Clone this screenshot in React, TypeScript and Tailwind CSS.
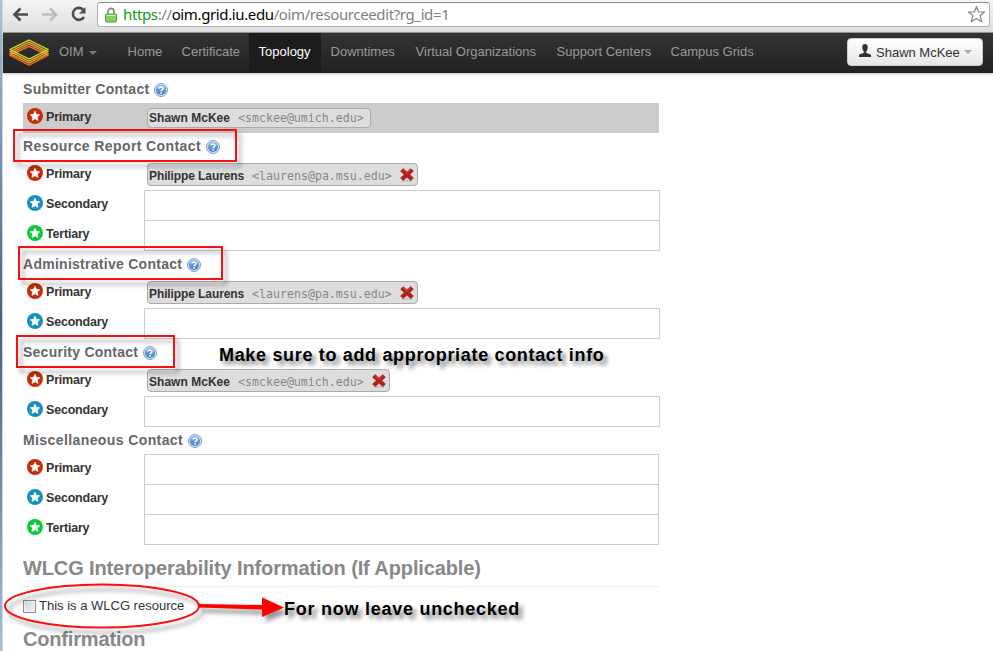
import React from 'react';

type Rank = 'Primary' | 'Secondary' | 'Tertiary';

const rankColor: Record<Rank, string> = {
  Primary: '#c72c08',
  Secondary: '#1790bf',
  Tertiary: '#0bcb3c',
};

function RankIcon({ rank }: { rank: Rank }) {
  return (
    <svg className="size-4 shrink-0" viewBox="0 0 16 16">
      <circle cx="8" cy="8" r="8" fill={rankColor[rank]} />
      <path
        d="M8 3.2 9.4 6.3 12.8 6.7 10.3 9 11 12.4 8 10.7 5 12.4 5.7 9 3.2 6.7 6.6 6.3Z"
        fill="#fff"
        stroke="#fff"
        strokeWidth=".7"
        strokeLinejoin="round"
      />
    </svg>
  );
}

function HelpIcon() {
  return (
    <svg className="size-[14px] shrink-0" viewBox="0 0 14 14">
      <defs>
        <linearGradient id="help" x1="0" y1="0" x2="0" y2="1">
          <stop offset="0" stopColor="#8db3e2" />
          <stop offset="1" stopColor="#457dc2" />
        </linearGradient>
      </defs>
      <circle cx="7" cy="7" r="6.5" fill="#d3e0f0" stroke="#7ba0d0" />
      <circle cx="7" cy="7" r="5.1" fill="url(#help)" />
      <path d="M5 5.6C5 3.4 9 3.4 9 5.5 9 6.8 7.1 6.8 7.1 8.2" fill="none" stroke="#fff" strokeWidth="1.5" />
      <rect x="6.3" y="9.2" width="1.6" height="1.5" fill="#fff" />
    </svg>
  );
}

function RemoveIcon() {
  return (
    <svg className="h-[14px] w-[14px]" viewBox="0 0 14 14">
      <path d="M2 13h10" stroke="#bbb" strokeWidth="1.4" />
      <path
        d="M3.2.6 7 4 10.8.6 13.4 3.200 9.800 6.600 13.500 10.100 10.800 12.600 7 9.300 3.200 12.600.5 10.100 4.200 6.600.6 3.200Z"
        fill="#b91d17"
        stroke="#8f1512"
        strokeWidth=".5"
      />
      <path d="M3.2 1.8 7 5.2 10.8 1.8" fill="none" stroke="#dc4034" strokeWidth="1" />
    </svg>
  );
}

function Chip({ name, mail, removable }: { name: string; mail: string; removable?: boolean }) {
  return (
    <div
      className={
        'ml-[3px] flex items-center rounded-[4px] border border-[#aaa] bg-[#ddd] pl-px ' +
        (removable ? 'mt-[3px] h-[23px] pr-[3px]' : 'mt-[5px] h-5 pr-[6px]')
      }
    >
      <span
        className={
          'whitespace-nowrap text-[12px] leading-5 font-bold text-[#333] ' +
          (name === 'Philippe Laurens' ? 'tracking-[-0.1px] ' : 'tracking-[0.03px] ') +
          (removable ? 'pt-0.5' : '')
        }
      >
        {name}
      </span>
      <span
        className={
          "ml-2 whitespace-nowrap font-['DejaVu_Sans_Mono',monospace] text-[11.6px] leading-5 text-[#888] " +
          (removable ? 'pt-0.5' : '')
        }
      >
        {mail}
      </span>
      {removable && (
        <span className="ml-2">
          <RemoveIcon />
        </span>
      )}
    </div>
  );
}

function Row({ rank, children }: { rank: Rank; children?: React.ReactNode }) {
  return (
    <div className="flex h-[30px] items-start">
      <div className="flex w-[121px] shrink-0 items-start gap-[3px] pt-[5px] pl-1">
        <RankIcon rank={rank} />
        <span className="pt-px text-[12.5px] leading-4 font-bold tracking-[-0.2px] text-[#333]">{rank}</span>
      </div>
      {children}
    </div>
  );
}

function Field({ narrow }: { narrow?: boolean }) {
  return <div className={'h-[31px] shrink-0 border border-[#ccc] bg-white ' + (narrow ? 'w-[515px]' : 'w-[516px]')} />;
}

function Heading({ title, spacing, frame, short }: { title: string; spacing: string; frame?: string; short?: boolean }) {
  return (
    <div className={'relative flex items-start gap-[5px] ' + (short ? 'h-[27px] pt-[3px]' : 'h-7 pt-1')}>
      <h4 className={'whitespace-nowrap text-[14px] leading-5 font-bold text-[#666] ' + spacing}>{title}</h4>
      <span className="mt-1">
        <HelpIcon />
      </span>
      {frame && (
        <div
          className={
            'absolute z-10 border-2 border-[#fa0f0f] [filter:drop-shadow(4px_5px_2px_rgba(0,0,0,0.35))] ' + frame
          }
        />
      )}
    </div>
  );
}

function Browser() {
  return (
    <div className="flex h-[33px] items-start border-b border-[#999] bg-linear-to-b from-[#f5f5f5] to-[#dedede]">
      <svg className="mt-[5px] ml-[9px] h-[18px] w-[82px] shrink-0" viewBox="0 0 82 18" fill="none" strokeWidth="2.600">
        <path d="M2 9.500h14M8.500 3.500 2.500 9.500 8.500 15.500" stroke="#4d4d4d" />
        <path d="M30 9.500h14M38 3.500 44 9.500 38 15.500" stroke="#bdbdbd" />
        <path d="M71.500 5A6 6 0 1 0 72 12" stroke="#4d4d4d" strokeWidth="2.600" />
        <path d="M73.500 2V8.500H67Z" fill="#4d4d4d" />
      </svg>
      <div className="mt-[2px] ml-[3px] flex h-[25px] w-[893px] items-center rounded-[3px] border border-[#b0b0b0] border-t-[#8e8e8e] bg-white">
        <svg className="ml-[7px] h-4 w-3 shrink-0" viewBox="0 0 12 16">
          <path d="M3 8V4.500a3 3 0 0 1 6 0V8" fill="none" stroke="#8d8d8d" strokeWidth="1.800" />
          <rect x=".5" y="7" width="11" height="8" rx="1" fill="#85cf61" stroke="#5b9f40" />
          <path d="M1.500 8.500h9" stroke="#c3edab" />
        </svg>
        <span className="-mt-px ml-[6px] flex-1 whitespace-nowrap font-['Noto_Sans',sans-serif] text-[15px] leading-5 tracking-[-0.38px] text-[#808080]">
          <span className="text-[#12991a]">https</span>://<span className="text-black">oim.grid.iu.edu</span>
          /oim/resourceedit?rg_id=1
        </span>
        <svg className="mr-[3px] size-[19px]" viewBox="0 0 19 19">
          <path
            d="M9.500 1.500 11.600 7H17.500L13 10.700 14.800 16.700 9.500 13.500 4.200 16.700 6 10.700 1.500 7H7.400Z"
            fill="#fff"
            stroke="#858585"
            strokeWidth="1.200"
            strokeLinejoin="round"
          />
        </svg>
      </div>
    </div>
  );
}

function Logo() {
  return (
    <svg className="h-7 w-10" viewBox="0 0 40 28" fill="none" strokeWidth="1.400">
      <path d="M20 7.300 38.800 16.300 20 26.300 1.200 16.300Z" stroke="#e07428" />
      <path d="M20 5.200 38.800 14.700 20 24.200 1.200 14.700Z" stroke="#f08c30" />
      <path d="M20 3.100 38.800 12.600 20 22.100 1.200 12.600Z" stroke="#d8b52c" />
      <path d="M20 1 38.800 10.500 20 20 1.200 10.500Z" stroke="#dfd431" />
    </svg>
  );
}

function Navbar() {
  return (
    <nav className="flex h-10 items-center bg-linear-to-b from-[#333] to-[#222] pr-[10px] text-[13px] whitespace-nowrap text-[#999] shadow-[0_1px_3px_rgba(0,0,0,0.25)]">
      <div className="ml-[6px] flex items-center">
        <Logo />
        <span className="ml-[10px] pb-0.5 leading-5">OIM</span>
        <span className="ml-[5px] border-x-4 border-t-4 border-x-transparent border-t-[#777]" />
      </div>
      <div className="ml-5 flex h-full items-center">
        <span className="w-[54px] pb-0.5 pl-[11px]">Home</span>
        <span className="w-[78px] pb-0.5 pl-[11px]">Certificate</span>
        <span className="flex h-full w-[72px] items-center bg-[#1c1c1c] pb-0.5 pl-[10px] text-white">Topology</span>
        <span className="w-[84px] pb-0.5 pl-[10px]">Downtimes</span>
        <span className="w-[141px] pb-0.5 pl-[11px]">Virtual Organizations</span>
        <span className="w-[114px] pb-0.5 pl-[11px]">Support Centers</span>
        <span className="pb-0.5 pl-[11px]">Campus Grids</span>
      </div>
      <button className="relative -top-px ml-auto flex h-7 w-[136px] items-center rounded-[4px] border border-[#ccc] bg-linear-to-b from-white to-[#e6e6e6] pl-[11px] text-[#333]">
        <svg className="-mt-1 h-[13px] w-3" viewBox="0 0 12 13">
          <path
            d="M6 0C3.600 0 3 1.800 3.300 4c.1 1.600.7 2.600 1.500 3.300v1.200C4.500 9.600.5 9.600 0 11v2h12v-2c-.5-1.400-4.500-1.400-4.800-2.500V7.300C8 6.600 8.600 5.600 8.700 4 9 1.800 8.400 0 6 0Z"
            fill="#333"
          />
        </svg>
        <span className="ml-[5px] pt-0.5">Shawn McKee</span>
        <span className="ml-1 border-x-4 border-t-4 border-x-transparent border-t-[#aaa]" />
      </button>
    </nav>
  );
}

export default function App() {
  return (
    <div className="relative flex h-[651px] w-[993px] overflow-hidden bg-white font-['Liberation_Sans',Arial,sans-serif]">
      <div className="w-[2px] shrink-0 bg-linear-to-b from-[#a9c5de] via-[#42617f] to-[#a3c0dc]" />
      <div className="w-px shrink-0 bg-[#d4d8dc]" />
      <div className="min-w-0 flex-1">
        <Browser />
        <Navbar />
        <main className="w-[657px] pt-[3px] pl-5">
          <Heading title="Submitter Contact" spacing="tracking-[0.3px]" short />
          <div className="w-[636px] bg-[#ccc]">
            <Row rank="Primary">
              <Chip name="Shawn McKee" mail="<smckee@umich.edu>" />
            </Row>
          </div>
          <Heading
            title="Resource Report Contact"
            spacing="tracking-[0.4px]"
            frame="-left-[10px] -top-[4px] h-[33px] w-[224px]"
            short
          />
          <Row rank="Primary">
            <Chip name="Philippe Laurens" mail="<laurens@pa.msu.edu>" removable />
          </Row>
          <Row rank="Secondary">
            <Field />
          </Row>
          <Row rank="Tertiary">
            <Field />
          </Row>
          <Heading
            title="Administrative Contact"
            spacing="tracking-[0.27px]"
            frame="-left-[5px] -top-[4px] h-[34px] w-[205px]"
          />
          <Row rank="Primary">
            <Chip name="Philippe Laurens" mail="<laurens@pa.msu.edu>" removable />
          </Row>
          <Row rank="Secondary">
            <Field />
          </Row>
          <Heading
            title="Security Contact"
            spacing="tracking-[0.25px]"
            frame="-left-[7px] -top-[3px] h-[33px] w-[159px]"
          />
          <Row rank="Primary">
            <Chip name="Shawn McKee" mail="<smckee@umich.edu>" removable />
          </Row>
          <Row rank="Secondary">
            <Field />
          </Row>
          <Heading title="Miscellaneous Contact" spacing="tracking-[0.4px]" />
          <Row rank="Primary">
            <Field narrow />
          </Row>
          <Row rank="Secondary">
            <Field narrow />
          </Row>
          <Row rank="Tertiary">
            <Field narrow />
          </Row>
          <h2 className="h-[43px] w-[636px] border-b border-[#eee] pt-[9px] text-[20px] leading-[30px] font-bold tracking-[-0.12px] whitespace-nowrap text-[#888]">
            WLCG Interoperability Information (If Applicable)
          </h2>
          <label className="mt-[9px] flex h-5 items-center text-[13px] leading-5 text-[#333]">
            <span className="mr-[3px] size-[13px] border border-[#8e8f8f] bg-linear-to-br from-[#cdd2d8] to-[#f6f6f6] shadow-[inset_0_0_0_1px_#f4f4f4]" />
            This is a WLCG resource
          </label>
          <h2 className="mt-2 text-[20px] leading-[30px] font-bold tracking-[-0.17px] text-[#888]">Confirmation</h2>
        </main>
      </div>
      <p className="absolute top-[343px] left-[219px] text-[18px] leading-6 font-bold tracking-[0.67px] whitespace-nowrap text-black [text-shadow:4px_4px_4px_rgba(0,0,0,0.5)]">
        Make sure to add appropriate contact info
      </p>
      <p className="absolute top-[597px] left-[284px] text-[18px] leading-6 font-bold tracking-[0.74px] whitespace-nowrap text-black [text-shadow:4px_4px_4px_rgba(0,0,0,0.5)]">
        For now leave unchecked
      </p>
      <svg
        className="absolute top-[575px] left-0 h-[70px] w-[300px] [filter:drop-shadow(4px_5px_2px_rgba(0,0,0,0.4))]"
        viewBox="0 0 300 70"
      >
        <ellipse cx="102" cy="31" rx="97" ry="21.500" fill="none" stroke="#fa0f0f" strokeWidth="2" />
        <path d="M199 29 262 30V22.500L284 32.500 262 42V34.500L199 32.500Z" fill="#f00" />
      </svg>
    </div>
  );
}
